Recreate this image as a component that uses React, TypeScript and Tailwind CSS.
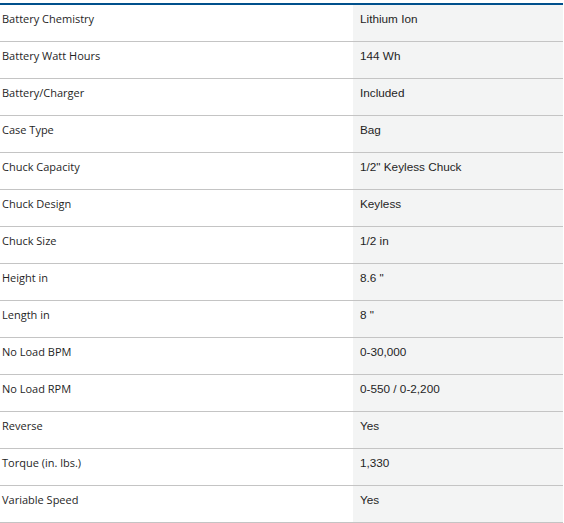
const specs: [string, string][] = [
  ['Battery Chemistry', 'Lithium Ion'],
  ['Battery Watt Hours', '144 Wh'],
  ['Battery/Charger', 'Included'],
  ['Case Type', 'Bag'],
  ['Chuck Capacity', '1/2" Keyless Chuck'],
  ['Chuck Design', 'Keyless'],
  ['Chuck Size', '1/2 in'],
  ['Height in', '8.6 "'],
  ['Length in', '8 "'],
  ['No Load BPM', '0-30,000'],
  ['No Load RPM', '0-550 / 0-2,200'],
  ['Reverse', 'Yes'],
  ['Torque (in. lbs.)', '1,330'],
  ['Variable Speed', 'Yes'],
];

export default function App() {
  return (
    <div className="w-[564px] h-[523px] bg-white pt-[3px]">
      <div className="w-[563px] border-t-2 border-[#00508c]">
        {specs.map(([label, value]) => (
          <div key={label} className="flex h-[37px] border-b border-[#c4c4c4]">
            <div className="w-[353px] pl-[2px] pt-[6px] text-[11px] leading-[16px] text-[#1f1f1f] font-['Open_Sans',sans-serif]">
              {label}
            </div>
            <div className="flex-1 bg-[#f3f4f4] pl-[7px] pt-[6px] text-[11.75px] leading-[16px] text-[#1f1f1f] font-['Liberation_Sans',Arial,sans-serif]">
              {value}
            </div>
          </div>
        ))}
      </div>
    </div>
  );
}
